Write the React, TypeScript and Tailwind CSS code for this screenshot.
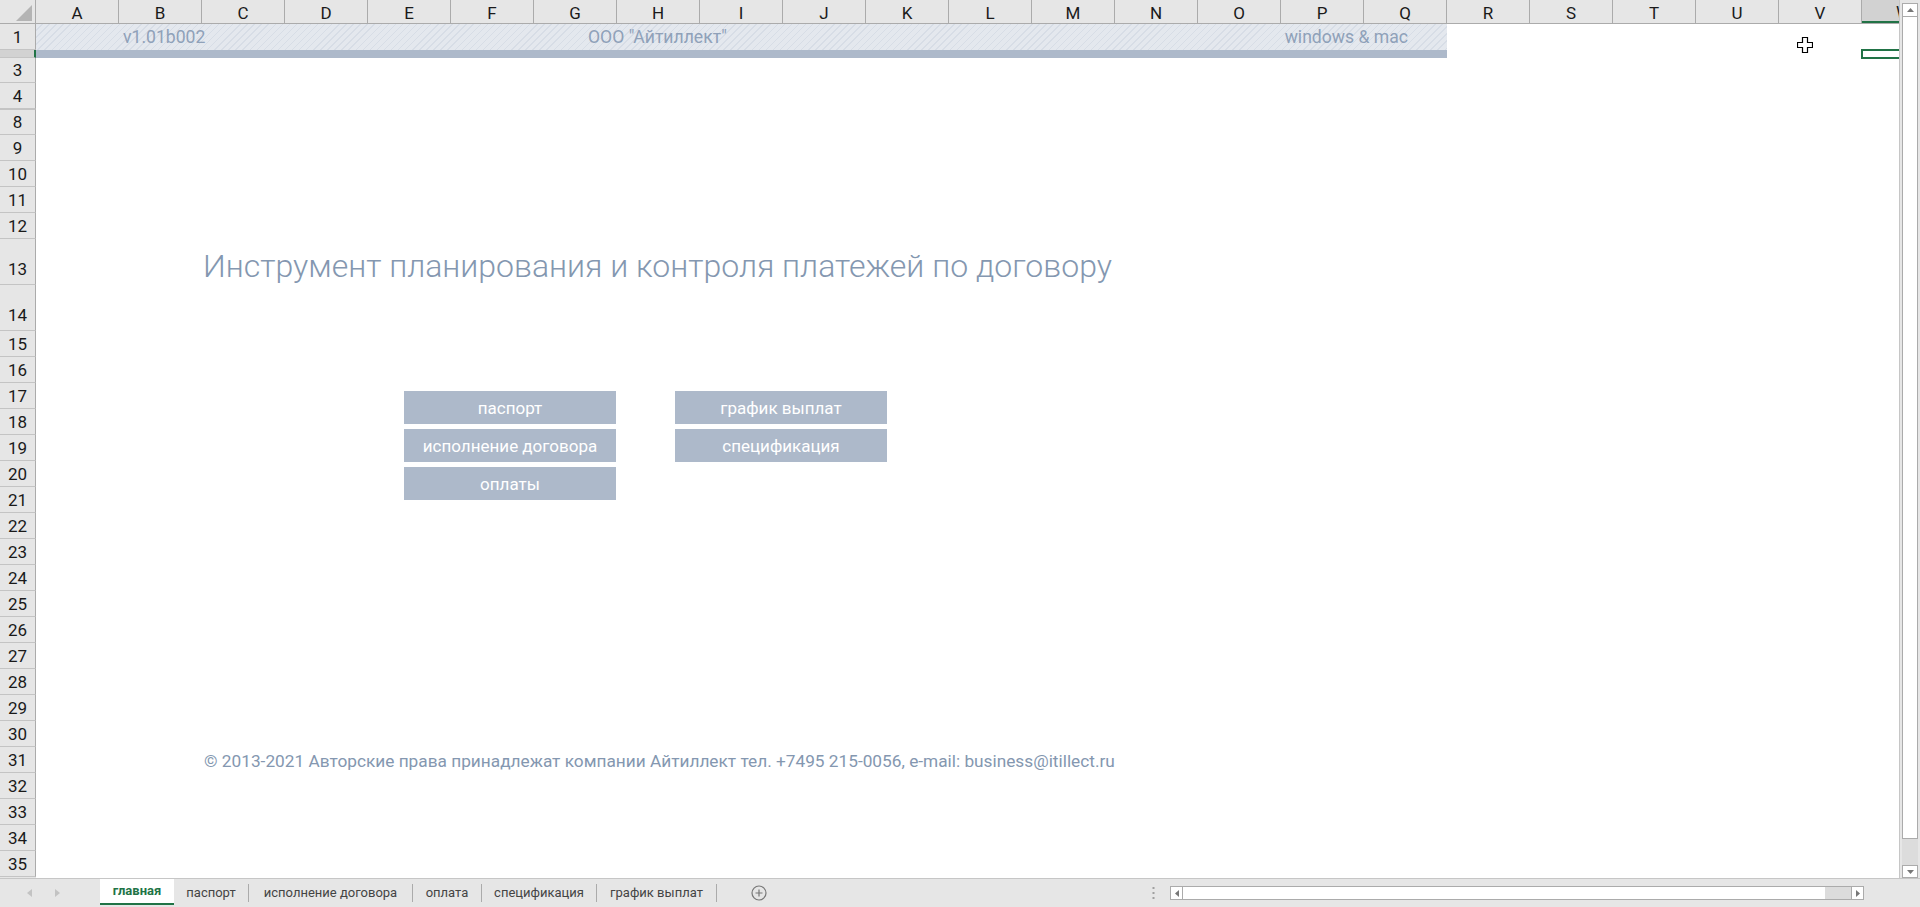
import React from 'react';

const COLS = ['A','B','C','D','E','F','G','H','I','J','K','L','M','N','O','P','Q','R','S','T','U','V'];

type Row = { l: string; h: string; sel?: boolean; dbl?: boolean; tall?: boolean };
const ROWS: Row[] = [
  { l: '1', h: 'h-[26px]' },
  { l: '', h: 'h-[8px]', sel: true },
  { l: '3', h: 'h-[25px]' },
  { l: '4', h: 'h-[26px]' },
  { l: '8', h: 'h-[26px]', dbl: true },
  { l: '9', h: 'h-[26px]' },
  { l: '10', h: 'h-[26px]' },
  { l: '11', h: 'h-[26px]' },
  { l: '12', h: 'h-[26px]' },
  { l: '13', h: 'h-[46px]', tall: true },
  { l: '14', h: 'h-[46px]', tall: true },
  ...Array.from({ length: 21 }, (_, i) => ({ l: String(15 + i), h: 'h-[26px]' })),
];

const TABS = [
  { t: 'паспорт', w: 'w-[75px]' },
  { t: 'исполнение договора', w: 'w-[164px]' },
  { t: 'оплата', w: 'w-[69px]' },
  { t: 'спецификация', w: 'w-[115px]' },
  { t: 'график выплат', w: 'w-[120px]' },
];

function Btn({ children }: { children: React.ReactNode }) {
  return (
    <div className="flex h-[33px] w-[212px] items-center justify-center bg-[#adb9ca] text-[17px] leading-[20px] text-white">
      {children}
    </div>
  );
}

export default function App() {
  return (
    <div className="flex h-[907px] w-[1920px] flex-col overflow-hidden bg-white font-['Roboto',sans-serif] text-[#262626]">
      <div className="flex h-[878px]">
        {/* sheet */}
        <div className="flex w-[1899px] flex-col overflow-hidden">
          {/* column header */}
          <div className="flex h-[24px] shrink-0 border-b border-[#ababab] bg-[#e6e6e6]">
            <div className="w-[36px] shrink-0 border-r border-[#ababab]">
              <svg width="35" height="23" viewBox="0 0 35 23">
                <polygon points="32,5 32,21 16,21" fill="#b4b4b4" />
              </svg>
            </div>
            {COLS.map((c) => (
              <div
                key={c}
                className="flex w-[83px] shrink-0 items-center justify-center border-r border-[#ababab] pt-[2px] text-[17px] leading-[20px] text-[#1a1a1a]"
              >
                {c}
              </div>
            ))}
            <div className="flex w-[83px] shrink-0 items-center justify-center border-b-2 border-[#217346] bg-[#d2d2d2] pt-[2px] text-[17px] leading-[20px] text-[#1a1a1a]">
              W
            </div>
          </div>
          {/* body */}
          <div className="flex flex-1">
            {/* row header */}
            <div className="flex w-[36px] shrink-0 flex-col bg-[#e6e6e6]">
              {ROWS.map((r, i) => (
                <div
                  key={i}
                  className={`flex ${r.h} shrink-0 items-end justify-center overflow-hidden border-b border-b-[#c4c4c4] ${
                    r.tall ? 'pb-[5px]' : 'pb-[2px]'
                  } text-[17px] leading-[20px] text-[#1a1a1a] ${
                    r.sel ? 'border-r-2 border-r-[#217346] bg-[#d2d2d2]' : 'border-r border-r-[#ababab]'
                  } ${r.dbl ? 'border-t border-t-[#c4c4c4]' : ''}`}
                >
                  {r.l}
                </div>
              ))}
            </div>
            {/* content */}
            <div className="relative flex-1">
              {/* row 1 band */}
              <div className="flex h-[26px] w-[1411px] items-center bg-[image:repeating-linear-gradient(135deg,#e4e8ee_0px,#e4e8ee_4px,#d7dde6_4px,#d7dde6_5px)] text-[17.6px] leading-[20px] text-[#8fa1b9]">
                <div className="w-[552px] pl-[87px]">v1.01b002</div>
                <div className="flex-1">ООО "Айтиллект"</div>
                <div className="pr-[39px]">windows &amp; mac</div>
              </div>
              {/* row 2 bar */}
              <div className="h-[8px] w-[1411px] bg-[#adb9ca]" />
              {/* title */}
              <div className="h-[189px]" />
              <div className="pl-[167px] text-[32px] font-light leading-[38px] text-[#8497b0]">
                Инструмент планирования и контроля платежей по договору
              </div>
              {/* buttons */}
              <div className="mt-[106px] flex gap-[59px] pl-[368px]">
                <div className="flex flex-col gap-[5px]">
                  <Btn>паспорт</Btn>
                  <Btn>исполнение договора</Btn>
                  <Btn>оплаты</Btn>
                </div>
                <div className="flex flex-col gap-[5px]">
                  <Btn>график выплат</Btn>
                  <Btn>спецификация</Btn>
                </div>
              </div>
              {/* footer */}
              <div className="mt-[251px] pl-[168px] text-[17.25px] leading-[20px] text-[#8497b0]">
                © 2013-2021 Авторские права принадлежат компании Айтиллект тел. +7495 215-0056, e-mail: business@itillect.ru
              </div>

              {/* selection W2 */}
              <div className="absolute left-[1825px] top-[25px] h-[10px] w-[83px] border-2 border-[#217346]" />
              {/* cursor */}
              <svg className="absolute left-[1761px] top-[13px]" width="16" height="16" viewBox="0 0 16 16">
                <path
                  d="M5.5 0.5h5v5h5v5h-5v5h-5v-5h-5v-5h5z"
                  fill="#fff"
                  stroke="#000"
                  strokeWidth="1.2"
                />
              </svg>
            </div>
          </div>
        </div>
        {/* vertical scrollbar */}
        <div className="flex w-[21px] flex-col border-l border-[#c6c6c6] bg-[#e6e6e6] px-[2px]">
          <div className="mt-[3px] flex h-[14px] items-center justify-center border border-[#ababab] bg-white">
            <svg width="7" height="4" viewBox="0 0 7 4">
              <polygon points="0,4 7,4 3.5,0" fill="#777" />
            </svg>
          </div>
          <div className="h-[822px] border border-t-0 border-[#ababab] bg-white" />
          <div className="h-[26px] bg-[#dcdcdc]" />
          <div className="flex h-[13px] items-center justify-center border border-[#ababab] bg-white">
            <svg width="7" height="4" viewBox="0 0 7 4">
              <polygon points="0,0 7,0 3.5,4" fill="#777" />
            </svg>
          </div>
        </div>
      </div>
      {/* tab bar */}
      <div className="flex h-[29px] items-stretch border-t border-[#c6c6c6] bg-[#e6e6e6] text-[13px]">
        <div className="flex w-[100px] items-center">
          <svg className="ml-[27px]" width="5" height="8" viewBox="0 0 5 8">
            <polygon points="5,0 5,8 0,4" fill="#c3c3c3" />
          </svg>
          <svg className="ml-[23px]" width="5" height="8" viewBox="0 0 5 8">
            <polygon points="0,0 0,8 5,4" fill="#c3c3c3" />
          </svg>
        </div>
        <div className="flex h-[26px] w-[74px] items-center justify-center border-b-2 border-[#217346] bg-white font-bold text-[#217346]">
          главная
        </div>
        {TABS.map((t) => (
          <div key={t.t} className={`flex ${t.w} items-center justify-center`}>
            <div className="flex h-full w-full items-center justify-center">
              <span className="flex-1 text-center text-[#444]">{t.t}</span>
              <span className="h-[18px] w-px bg-[#ababab]" />
            </div>
          </div>
        ))}
        <div className="ml-[34px] flex items-center">
          <svg width="16" height="16" viewBox="0 0 16 16">
            <circle cx="8" cy="8" r="7" fill="none" stroke="#777" strokeWidth="1.2" />
            <path d="M8 4.5v7M4.5 8h7" stroke="#777" strokeWidth="1.2" />
          </svg>
        </div>
        <div className="ml-[385px] flex items-center">
          <svg width="3" height="12" viewBox="0 0 3 12">
            <rect x="0.5" y="0" width="2" height="2" fill="#a0a0a0" />
            <rect x="0.5" y="5" width="2" height="2" fill="#a0a0a0" />
            <rect x="0.5" y="10" width="2" height="2" fill="#a0a0a0" />
          </svg>
        </div>
        <div className="ml-[15px] flex items-center">
          <div className="flex h-[14px] w-[694px] border border-[#ababab] bg-white">
            <div className="flex w-[12px] items-center justify-center border-r border-[#ababab]">
              <svg width="4" height="7" viewBox="0 0 4 7">
                <polygon points="4,0 4,7 0,3.5" fill="#777" />
              </svg>
            </div>
            <div className="flex-1" />
            <div className="w-[26px] bg-[#dcdcdc]" />
            <div className="flex w-[12px] items-center justify-center border-l border-[#ababab]">
              <svg width="4" height="7" viewBox="0 0 4 7">
                <polygon points="0,0 0,7 4,3.5" fill="#777" />
              </svg>
            </div>
          </div>
        </div>
      </div>
    </div>
  );
}
